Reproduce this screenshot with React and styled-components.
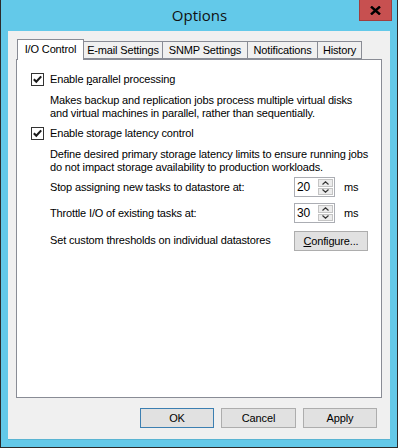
import styled, { createGlobalStyle } from "styled-components";

const Global = createGlobalStyle`
  html, body { margin: 0; padding: 0; background: #fff; }
  #root { width: 398px; height: 448px; }
  * { box-sizing: border-box; }
`;

const Window = styled.div`
  width: 398px;
  height: 448px;
  background: #63c9e9;
  border: 1px solid #2b2b2b;
  border-top: none;
  display: flex;
  flex-direction: column;
  font-family: "Liberation Sans", Arial, sans-serif;
  font-size: 11px;
  letter-spacing: -0.15px;
  color: #000;
`;

const TitleBar = styled.div`
  height: 31px;
  display: grid;
  grid-template-columns: 33px 1fr 33px;
  padding: 0 5px 0 6px;
`;

const Title = styled.div`
  grid-column: 2;
  text-align: center;
  font-family: "Open Sans", "Noto Sans", sans-serif;
  font-size: 15px;
  letter-spacing: 0;
  line-height: 31px;
  color: #111;
`;

const CloseBtn = styled.div`
  height: 21px;
  background: #c75050;
  border: 1px solid #a03e3e;
  border-top: none;
  display: flex;
  align-items: center;
  justify-content: center;
`;

const Client = styled.div`
  flex: 1;
  margin: 0 7px 7px 7px;
  background: #f0f0f0;
  border-bottom: 1px solid #5ab4d2;
  padding: 8px 8px 11px 8px;
  display: flex;
  flex-direction: column;
`;

const TabStrip = styled.div`
  display: flex;
  align-items: flex-end;
  height: 20px;
  padding-left: 1px;
  position: relative;
  z-index: 1;
`;

const Tab = styled.div`
  width: ${(p) => p.$w}px;
  height: ${(p) => (p.$active ? 21 : 18)}px;
  margin-bottom: ${(p) => (p.$active ? -1 : 0)}px;
  margin-left: -1px;
  background: ${(p) => (p.$active ? "#fff" : "#f0f0f0")};
  border: 1px solid #898c95;
  border-bottom: ${(p) => (p.$active ? "none" : "1px solid #898c95")};
  display: flex;
  align-items: center;
  justify-content: center;
  padding-bottom: ${(p) => (p.$active ? 2 : 0)}px;
  white-space: nowrap;
  &:first-child { margin-left: 0; }
`;

const Panel = styled.div`
  flex: 1;
  background: #fff;
  border: 1px solid #898c95;
  padding: 12px 14px 0 14px;
`;

const CheckRow = styled.label`
  display: flex;
  align-items: center;
  gap: 6px;
  height: 14px;
  margin-top: ${(p) => p.$mt || 0}px;
`;

const Box = styled.span`
  width: 13px;
  height: 13px;
  border: 1px solid #333;
  background: #fff;
  display: flex;
  align-items: center;
  justify-content: center;
`;

const Desc = styled.p`
  margin: 8px 0 0 19px;
  line-height: 13px;
  white-space: nowrap;
`;

const U = styled.span`
  text-decoration: underline;
`;

const Settings = styled.div`
  margin: 3px 0 0 19px;
  display: grid;
  grid-template-columns: 1fr 41px 32px;
  align-items: center;
  row-gap: 6px;
`;

const Spinner = styled.div`
  display: flex;
  height: 20px;
  border: 1px solid #abadb3;
  background: #fff;
`;

const SpinText = styled.div`
  width: 23px;
  padding-left: 2px;
  line-height: 18px;
  font-size: 12px;
`;

const SpinButtons = styled.div`
  flex: 1;
  display: flex;
  flex-direction: column;
  gap: 1px;
  padding: 1px 1px 1px 0;
`;

const SpinBtn = styled.div`
  flex: 1;
  background: #ececec;
  border: 1px solid #c4c4c4;
  display: flex;
  align-items: center;
  justify-content: center;
`;

const Unit = styled.span`
  padding-left: 9px;
`;

const PushButton = styled.div`
  height: 20px;
  width: ${(p) => p.$w || 74}px;
  background: #e1e1e1;
  border: 1px solid ${(p) => (p.$default ? "#3c7fb1" : "#adadad")};
  display: flex;
  align-items: center;
  justify-content: center;
`;

const ConfigureCell = styled.div`
  grid-column: 2 / 4;
  margin-top: 2px;
`;

const Footer = styled.div`
  display: flex;
  justify-content: flex-end;
  gap: 7px;
  padding: 10px 5px 0 0;
`;

const Check = () => (
  <svg width="11" height="11" viewBox="0 0 11 11">
    <path d="M1.8 5.2 L4.3 7.8 L9.2 2.4" fill="none" stroke="#1a1a1a" strokeWidth="2.1" />
  </svg>
);

const Arrow = ({ up }) => (
  <svg width="7" height="4" viewBox="0 0 7 4">
    <path d={up ? "M0.5 3.5 L3.5 0.8 L6.5 3.5" : "M0.5 0.5 L3.5 3.2 L6.5 0.5"} fill="none" stroke="#333" strokeWidth="1.2" />
  </svg>
);

const SpinBox = ({ value }) => (
  <Spinner>
    <SpinText>{value}</SpinText>
    <SpinButtons>
      <SpinBtn><Arrow up /></SpinBtn>
      <SpinBtn><Arrow /></SpinBtn>
    </SpinButtons>
  </Spinner>
);

const tabs = [
  { name: "I/O Control", w: 67 },
  { name: "E-mail Settings", w: 80 },
  { name: "SNMP Settings", w: 86 },
  { name: "Notifications", w: 71 },
  { name: "History", w: 45 },
];

export default function App() {
  return (
    <>
      <Global />
      <Window>
        <TitleBar>
          <Title>Options</Title>
          <CloseBtn>
            <svg width="11" height="9" viewBox="0 0 11 9">
              <path d="M1 0.5 L10 8.5 M10 0.5 L1 8.5" stroke="#000" strokeWidth="2.4" />
            </svg>
          </CloseBtn>
        </TitleBar>
        <Client>
          <TabStrip>
            {tabs.map((t, i) => (
              <Tab key={t.name} $w={t.w} $active={i === 0}>
                {t.name}
              </Tab>
            ))}
          </TabStrip>
          <Panel>
            <CheckRow>
              <Box><Check /></Box>
              <span>Enable <U>p</U>arallel processing</span>
            </CheckRow>
            <Desc>
              Makes backup and replication jobs process multiple virtual disks
              <br />
              and virtual machines in parallel, rather than sequentially.
            </Desc>
            <CheckRow $mt={6}>
              <Box><Check /></Box>
              <span>Enable storage latency control</span>
            </CheckRow>
            <Desc>
              Define desired primary storage latency limits to ensure running jobs
              <br />
              do not impact storage availability to production workloads.
            </Desc>
            <Settings>
              <span>Stop assigning new tasks to datastore at:</span>
              <SpinBox value="20" />
              <Unit>ms</Unit>
              <span>Throttle I/O of existing tasks at:</span>
              <SpinBox value="30" />
              <Unit>ms</Unit>
              <span>Set custom thresholds on individual datastores</span>
              <ConfigureCell>
                <PushButton $w={74}><span><U>C</U>onfigure...</span></PushButton>
              </ConfigureCell>
            </Settings>
          </Panel>
          <Footer>
            <PushButton $default $w={74}>OK</PushButton>
            <PushButton $w={75}>Cancel</PushButton>
            <PushButton $w={74}>Apply</PushButton>
          </Footer>
        </Client>
      </Window>
    </>
  );
}
